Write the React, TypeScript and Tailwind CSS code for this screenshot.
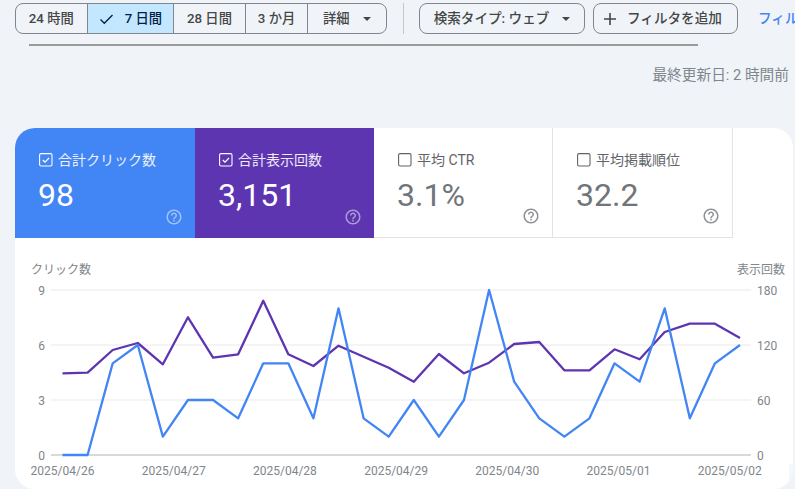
import React from "react";

const blue = [0,0,5,6,1,3,3,2,5,5,2,8,2,1,3,1,3,9,4,2,1,2,5,4,8,2,5,6];
const purple = [373.3,372.7,350,343,364.3,317.3,357.7,354.3,300.7,354.3,366,345.7,356.7,367.7,381.7,354,373.3,362.7,344,342,370.3,370.3,349.3,359.3,332,323.7,323.7,338];
const X0 = 62.5, STEP = (740 - 62.5) / 27;
const px = (i: number) => X0 + STEP * i;
const bluePts = blue.map((v, i) => `${px(i)},${455 - v * (165 / 9)}`).join(" ");
const purplePts = purple.map((y, i) => `${px(i)},${y}`).join(" ");

function Help({ light }: { light?: boolean }) {
  return (
    <svg width="18" height="18" viewBox="0 0 24 24" className={light ? "absolute right-[12px] bottom-[12px] opacity-50" : "absolute right-[12px] bottom-[12px] opacity-70"} fill={light ? "#ffffff" : "#5f6368"}>
      <path d="M11 18h2v-2h-2v2zm1-16C6.48 2 2 6.48 2 12s4.48 10 10 10 10-4.48 10-10S17.52 2 12 2zm0 18c-4.41 0-8-3.59-8-8s3.59-8 8-8 8 3.59 8 8-3.59 8-8 8zm0-14c-2.21 0-4 1.79-4 4h2c0-1.1.9-2 2-2s2 .9 2 2c0 2-3 1.75-3 5h2c0-2.25 3-2.5 3-5 0-2.21-1.79-4-4-4z" />
    </svg>
  );
}

function Box({ checked }: { checked?: boolean }) {
  return (
    <svg width="16" height="16" viewBox="0 0 16 16" fill="none" className="shrink-0">
      <rect x="1.6" y="1.6" width="12.4" height="12.4" rx="1.5" stroke={checked ? "#ffffff" : "#5f6368"} strokeWidth="1.1" />
      {checked && <path d="M4.8 8l2.2 2.2L11 6" stroke="#ffffff" strokeWidth="1.2" />}
    </svg>
  );
}

function Metric({ label, value, bg, w, active }: { label: string; value: string; bg: string; w: string; active?: boolean }) {
  return (
    <div className={`${bg} ${w} relative h-[110px] pl-[23px] pt-[22px] shrink-0 ${active ? "" : "border-r border-b border-[#e3e3e3]"}`}>
      <div className={`flex items-center gap-[4px] text-[14px] leading-5 ${active ? "text-white/90" : "text-[#5f6368]"}`}>
        <Box checked={active} />
        <span>{label}</span>
      </div>
      <div className={`mt-[5px] text-[32px] leading-[40px] ${active ? "text-white" : "text-[#70757a]"}`}>{value}</div>
      <Help light={active} />
    </div>
  );
}

function Seg({ w, children, active, gap }: { w: string; children: React.ReactNode; active?: boolean; gap?: string }) {
  return (
    <div className={`${w} ${gap ?? "gap-[11px]"} flex items-center justify-center border-r border-[#80868b] last:border-r-0 text-[13.3px] font-medium ${active ? "bg-[#c2e7ff] text-[#041e49]" : "text-[#444746]"}`}>
      {children}
    </div>
  );
}

const Caret = () => (
  <svg width="8" height="4" viewBox="0 0 8 4" fill="#444746" className="shrink-0"><path d="M0 0h8L4 4z" /></svg>
);

export default function App() {
  return (
    <div className="w-[795px] h-[489px] overflow-hidden bg-[#f0f4f9] font-['Roboto','Noto_Sans_CJK_JP',sans-serif] text-[#444746]">
      <div className="flex items-center pt-[3px] pl-[15px] whitespace-nowrap">
        <div className="flex h-[31px] w-[372px] rounded-[8px] border border-[#80868b] overflow-hidden shrink-0">
          <Seg w="w-[72px]">24 時間</Seg>
          <Seg w="w-[87px]" active>
            <svg width="15" height="12" viewBox="0 0 15 12" fill="none" className="shrink-0"><path d="M1.5 6.5l3.8 3.8L13.5 2" stroke="#041e49" strokeWidth="1.3" /></svg>
            <span>7 日間</span>
          </Seg>
          <Seg w="w-[72px]">28 日間</Seg>
          <Seg w="w-[63px]">3 か月</Seg>
          <Seg w="w-[78px]" gap="gap-[14px]"><span>詳細</span><Caret /></Seg>
        </div>
        <div className="w-px h-[31px] bg-[#c7c7c7] ml-[16px] mr-[15px] shrink-0" />
        <div className="flex h-[31px] w-[166px] items-center justify-center gap-[13px] rounded-[8px] border border-[#80868b] text-[13.6px] font-medium shrink-0">
          <span>検索タイプ: ウェブ</span><Caret />
        </div>
        <div className="flex h-[31px] w-[145px] ml-[8px] items-center pl-[9px] gap-[10px] rounded-[8px] border border-[#80868b] text-[13.6px] font-medium shrink-0">
          <svg width="14" height="14" viewBox="0 0 14 14" fill="#444746" className="shrink-0"><path d="M6.2 1h1.6v5.2H13v1.6H7.8V13H6.2V7.8H1V6.2h5.2z" /></svg>
          <span>フィルタを追加</span>
        </div>
        <div className="ml-[20px] text-[13.6px] font-medium text-[#4285f4]">フィルタをリセット</div>
      </div>
      <div className="mt-[10px] ml-[29px] w-[669px] h-[2px] bg-[#9a9a9a]" />
      <div className="mt-[19px] pr-[6px] text-right text-[14.7px] leading-5 text-[#80868b]">最終更新日: 2 時間前</div>
      <div className="relative mt-[43px] ml-[15px] w-[778px] h-[361px] rounded-[20px] bg-white overflow-hidden">
        <div className="flex h-[110px]">
          <Metric label="合計クリック数" value="98" bg="bg-[#4285f4]" w="w-[180px]" active />
          <Metric label="合計表示回数" value="3,151" bg="bg-[#5e35b1]" w="w-[179px]" active />
          <Metric label="平均 CTR" value="3.1%" bg="bg-white" w="w-[179px]" />
          <Metric label="平均掲載順位" value="32.2" bg="bg-white" w="w-[180px]" />
        </div>
        <svg width="778" height="251" viewBox="15 238 778 251" fontSize="12" fill="#80868b" className="block">
          {[290, 345, 400].map((y) => <line key={y} x1="51" x2="751" y1={y} y2={y} stroke="#f4f4f4" strokeWidth="2" />)}
          <line x1="51" x2="751" y1="455" y2="455" stroke="#cccccc" strokeWidth="1.5" />
          <text x="31" y="274">クリック数</text>
          <text x="785" y="274" textAnchor="end">表示回数</text>
          {["9", "6", "3", "0"].map((t, i) => <text key={t} x="45" y={294.5 + i * 55} textAnchor="end">{t}</text>)}
          {["180", "120", "60", "0"].map((t, i) => <text key={t} x="757" y={294.5 + i * 55}>{t}</text>)}
          {["2025/04/26", "2025/04/27", "2025/04/28", "2025/04/29", "2025/04/30", "2025/05/01", "2025/05/02"].map((t, i) => (
            <text key={t} x={62.5 + i * 111.2} y="475" textAnchor="middle">{t}</text>
          ))}
          <polyline points={purplePts} fill="none" stroke="#5e35b1" strokeWidth="2.3" strokeLinejoin="round" />
          <polyline points={bluePts} fill="none" stroke="#4285f4" strokeWidth="2.3" strokeLinejoin="round" />
        </svg>
        <div className="absolute right-0 top-[336px] bottom-0 w-[4px] bg-[#f4f7fb]" />
      </div>
    </div>
  );
}
